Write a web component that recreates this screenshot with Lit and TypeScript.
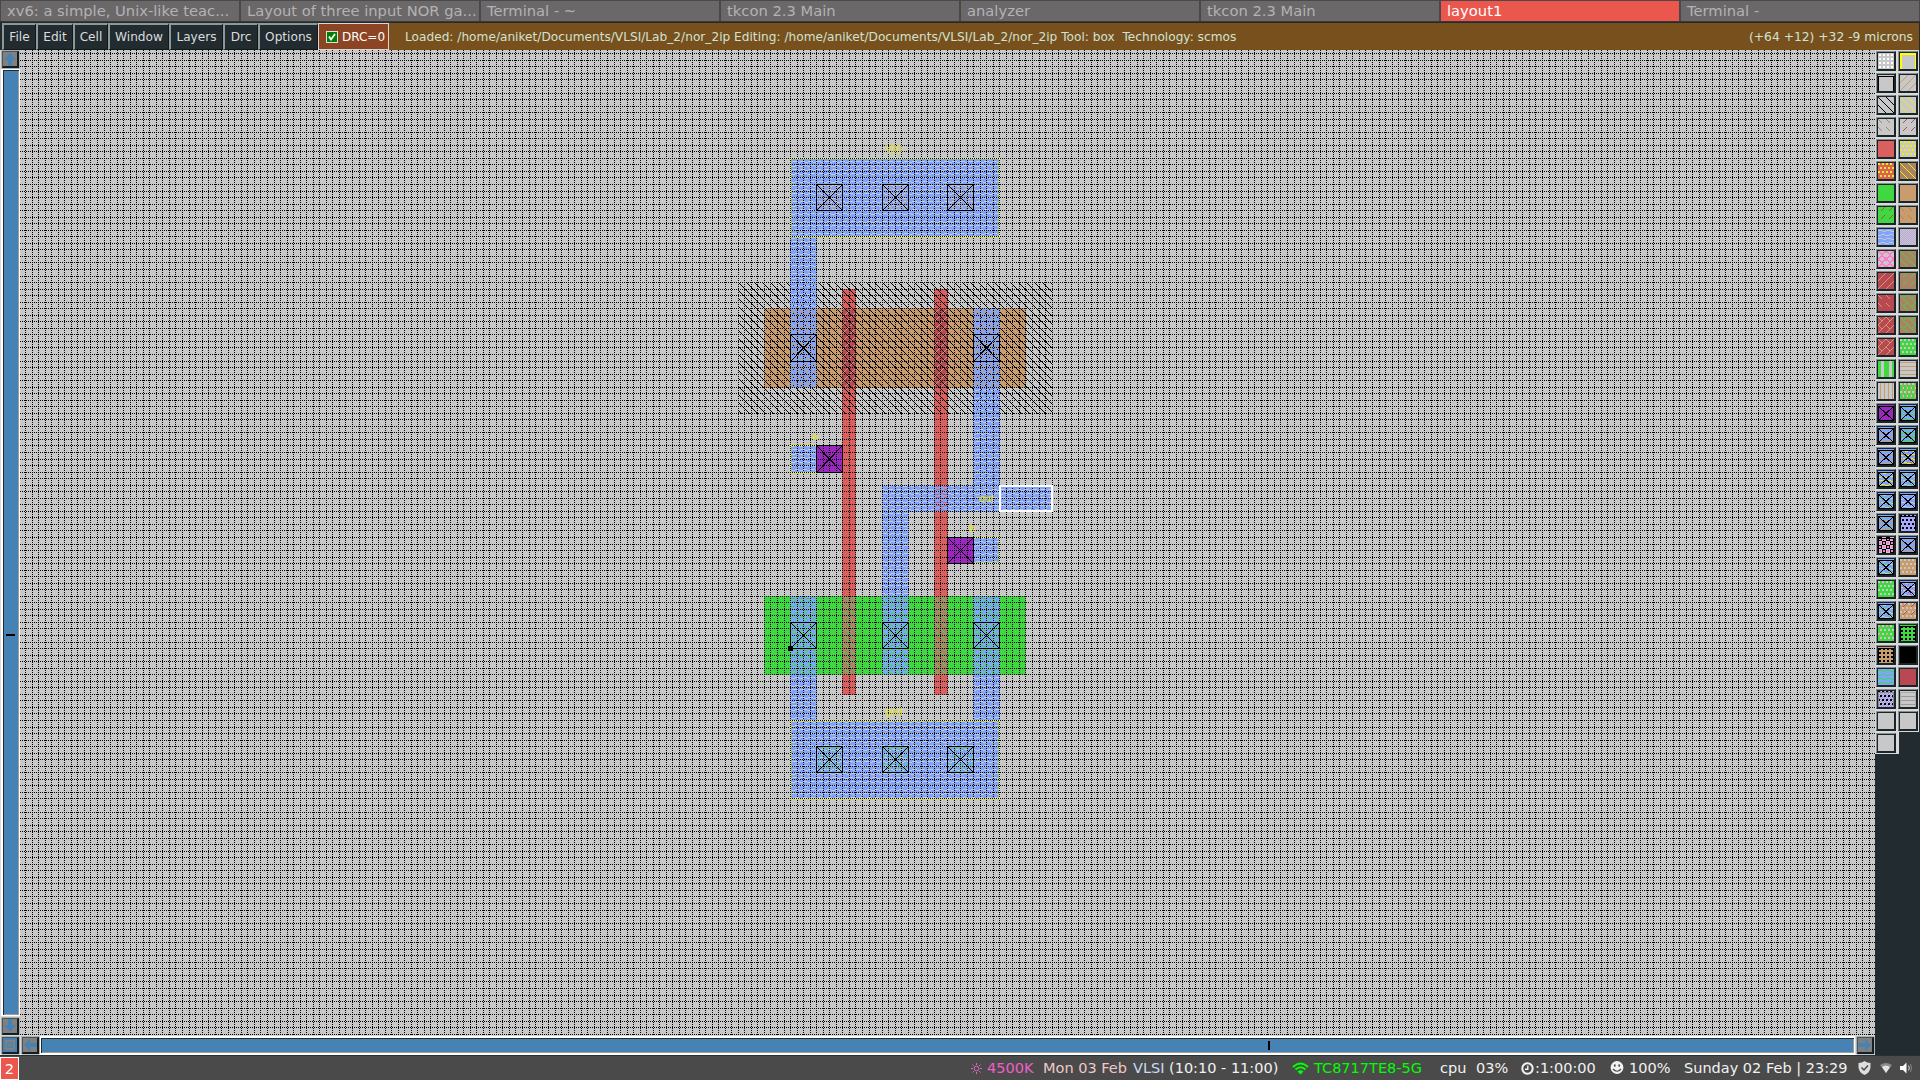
import { LitElement, html, svg, css } from "lit";
import { customElement } from "lit/decorators.js";

/* ---------- palette ---------- */
const GRAY = "#c8c8c8", TAN = "#c89c6c", BROWN = "#aa8264", RED = "#dc5f5f", CRIM = "#b94852";
const GREEN = "#40d840", BLUE = "#80a5ff", YEL = "#f0f000", PURP = "#9a28be", LAV = "#bda6e0";

/* ---------- 8x8 stipples ---------- */
const STIPPLES: Record<string, string[]> = {
  back: ["#.......", ".#......", "..#.....", "...#....", "....#...", ".....#..", "......#.", ".......#"],
  slash: [".......#", "......#.", ".....#..", "....#...", "...#....", "..#.....", ".#......", "#......."],
  backdash: ["#.......", ".#......", "..#.....", "...#....", "........", "........", "........", "........"],
  slashdash: ["......#.", ".....#..", "....#...", "...#....", "........", "........", "........", "........"],
  dots: ["........", ".##..##.", ".##..##.", "........", "........", ".##..##.", ".##..##.", "........"],
  brick: ["##..##..", "##..##..", "........", "........", "..##..##", "..##..##", "........", "........"],
  metal: ["########", ".....###", "#####...", "########", "########", "###....#", "...####.", "########"],
  dash: ["........", "#####...", ".....###", "........", "........", "...####.", "###....#", "........"],
  check: ["#.#.#.#.", ".#.#.#.#", "#.#.#.#.", ".#.#.#.#", "#.#.#.#.", ".#.#.#.#", "#.#.#.#.", ".#.#.#.#"],
  mesh: ["##....##", "###..###", "..####..", "...##...", "...##...", "..####..", "###..###", "##....##"],
  hline: ["........", "########", "........", "........", "........", "########", "........", "........"],
  vline: ["..#...#.", "..#...#.", "..#...#.", "..#...#.", "..#...#.", "..#...#.", "..#...#.", "..#...#."],
  stripe: ["###...##", "###...##", "###...##", "###...##", "###...##", "###...##", "###...##", "###...##"],
  specks: ["........", "..#...#.", "........", "#...#...", "........", "..##...#", "........", "#...#..."],
  block: ["####....", "#..#....", "#..#....", "####....", "....####", "....#..#", "....#..#", "....####"],
};

const used = new Map<string, [string, string]>();
function fill(kind: string, color: string): string {
  const id = `${kind}-${color.replace("#", "")}`;
  used.set(id, [kind, color]);
  return `url(#${id})`;
}
function stipplePath(kind: string): string {
  let d = "";
  STIPPLES[kind].forEach((row, y) => {
    for (const m of row.matchAll(/#+/g)) d += `M${m.index} ${y}h${m[0].length}v1h-${m[0].length}z`;
  });
  return d;
}

/* ---------- layer swatches: base colour, stipples, outline / cross ---------- */
type Swatch = { base: string; over?: [string, string][]; edge?: string; open?: boolean; cross?: boolean };
const s = (base: string, ...over: [string, string][]): Swatch => ({ base, over });
const x = (base: string, ...over: [string, string][]): Swatch => ({ base, over, edge: "#000", cross: true });
const e = (base: string, edge: string, ...over: [string, string][]): Swatch => ({ base, over, edge });

const SWATCHES: Swatch[] = [
  s(GRAY, ["dots", "#fff"]), { base: GRAY, edge: "#ffff00", open: true },
  e(GRAY, "#000"), s(GRAY, ["slash", TAN]),
  s(GRAY, ["back", "#000"]), s(GRAY, ["back", YEL]),
  s(GRAY, ["backdash", BROWN]), s(GRAY, ["slashdash", CRIM]),
  s(RED), s(GRAY, ["brick", YEL]),
  s(RED, ["brick", YEL]), s(BROWN, ["back", YEL]),
  s(GREEN), s(TAN),
  s(GREEN, ["slashdash", CRIM]), s(TAN, ["backdash", BROWN]),
  s(GRAY, ["metal", BLUE]), s(GRAY, ["check", LAV]),
  s(GRAY, ["mesh", "#ff7ac8"]), s(BROWN, ["back", GREEN]),
  s(CRIM, ["slash", TAN]), s(BROWN, ["slashdash", GREEN]),
  s(CRIM, ["backdash", TAN]), s(BROWN, ["back", GREEN], ["slashdash", GREEN]),
  s(CRIM, ["slash", TAN], ["backdash", TAN]), s(BROWN, ["back", GREEN], ["slashdash", GREEN]),
  s(CRIM, ["slash", TAN], ["backdash", TAN]), s(GREEN, ["brick", GRAY]),
  s(GRAY, ["stripe", GREEN]), s(GRAY, ["hline", TAN]),
  s(GRAY, ["vline", TAN]), s(GREEN, ["brick", GRAY], ["vline", TAN]),
  x(PURP), x(BLUE, ["dash", GREEN]),
  x(BLUE, ["dash", TAN]), x(BLUE, ["dash", GREEN], ["specks", GREEN]),
  x(BLUE, ["dash", TAN]), x(BLUE, ["dash", YEL], ["specks", RED]),
  x(BLUE, ["dash", YEL]), x(BLUE, ["dash", GRAY], ["specks", GREEN]),
  x(BLUE, ["dash", GRAY], ["specks", GREEN]), x(BLUE, ["dash", GRAY]),
  x(BLUE, ["specks", GREEN], ["dash", TAN]), e("#a8a8ff", "#000", ["brick", "#000"]),
  e("#d8c0dc", "#000", ["block", "#000"], ["dots", "#ff7ac8"]), x(BLUE, ["dash", TAN]),
  x(BLUE, ["dash", GRAY], ["specks", GREEN]), s(TAN, ["brick", GRAY]),
  s(GREEN, ["brick", GRAY]), x(BLUE, ["dash", GRAY], ["specks", RED]),
  x(BLUE, ["dash", GRAY], ["specks", GREEN]), s(TAN, ["brick", GRAY], ["slashdash", CRIM]),
  s(GREEN, ["brick", GRAY], ["backdash", TAN]), e(GREEN, "#000", ["dots", "#000"]),
  e(TAN, "#000", ["dots", "#000"]), s("#000"),
  s(BLUE, ["dash", GREEN]), s(CRIM),
  e(GRAY, "#888", ["check", "#9c8cff"], ["brick", "#000"]), e(GRAY, "#aaa", ["hline", "#9a9a9a"]),
  s(GRAY), s(GRAY),
  s(GRAY),
];

/* ---------- cell geometry, in lambda ---------- */
const X = (u: number) => Math.floor(790.6 + (u * 85) / 13);
const Y = (u: number) => Math.floor(158.37 + u * 6.5365);
type Box = [number, number, number, number];

const rect = ([x0, y0, x1, y1]: Box, paint: string) =>
  svg`<rect x=${X(x0)} y=${Y(y0)} width=${X(x1) - X(x0) + 1} height=${Y(y1) - Y(y0) + 1} fill=${paint}></rect>`;

const METAL: Box[] = [
  [0, 0, 32, 12], [0, 12, 4, 35], [28, 23, 32, 50], [14, 50, 40, 54], [14, 54, 18, 79],
  [0, 44, 4, 48], [28, 58, 32, 62], [0, 67, 4, 86], [28, 67, 32, 86], [0, 86, 32, 98],
];
const POLY: Box[] = [[8, 20, 10, 82], [22, 20, 24, 82]];
const CONTACTS: [number, number, string][] = [
  [4, 4, TAN], [14, 4, TAN], [24, 4, TAN], [0, 27, ""], [28, 27, ""],
  [0, 71, ""], [14, 71, ""], [28, 71, ""], [4, 90, GREEN], [14, 90, GREEN], [24, 90, GREEN],
];
const PORTS: Box[] = [[0, 0, 32, 12], [0, 44, 8, 48], [24, 58, 32, 62], [0, 86, 32, 98]];

function gridPaths(): [string, string] {
  let v = "", h = "";
  for (let k = -118; X(k) < 1875; k++) if (X(k) > 20) v += `M${X(k)} 50h1v985h-1z`;
  for (let k = -17; Y(k) < 1035; k++) if (Y(k) >= 50) h += `M20 ${Y(k)}h1855v1h-1855z`;
  return [v, h];
}

function port([a, b, c, d]: Box) {
  const w = X(c) - X(a) + 1, t = Y(d) - Y(b) + 1;
  return svg`<path d="M${X(a)} ${Y(b)}h${w}v1h-${w}zM${X(a)} ${Y(d)}h${w}v1h-${w}z" fill="url(#port-h)"></path>
    <path d="M${X(a)} ${Y(b)}h1v${t}h-1zM${X(c)} ${Y(b)}h1v${t}h-1z" fill="url(#port-v)"></path>`;
}

function cross(cx: number, cy: number) {
  const a = X(cx), b = Y(cy), w = X(cx + 4) - a, t = Y(cy + 4) - b;
  return svg`<rect x=${a + 0.5} y=${b + 0.5} width=${w} height=${t} fill="none" stroke="#000"></rect>
    <path d="M${a + 0.5} ${b + 0.5}l${w} ${t}M${a + w + 0.5} ${b + 0.5}l${-w} ${t}" stroke="#000" fill="none"></path>`;
}

function layout() {
  const [v, h] = gridPaths();
  return html`<svg class="cell" viewBox="20 50 1855 985" width="1855" height="985" shape-rendering="crispEdges">
    <defs>
      <pattern id="dot-v" width="2" height="2" patternUnits="userSpaceOnUse"><rect width="2" height="1"></rect></pattern>
      <pattern id="dot-h" width="2" height="2" patternUnits="userSpaceOnUse"><rect width="1" height="2"></rect></pattern>
      <pattern id="port-v" width="2" height="2" patternUnits="userSpaceOnUse"><rect y="1" width="2" height="1" fill="#ffff00"></rect></pattern>
      <pattern id="port-h" width="2" height="2" patternUnits="userSpaceOnUse"><rect x="1" width="1" height="2" fill="#ffff00"></rect></pattern>
    </defs>
    <rect x="20" y="50" width="1855" height="985" fill=${GRAY}></rect>
    ${rect([-4, 23, 36, 35], TAN)} ${rect([-4, 67, 36, 79], GREEN)}
    ${POLY.map((b) => rect(b, RED))}
    ${POLY.map((b) => rect([b[0], 23, b[2], 35], CRIM))}
    ${POLY.map((b) => rect([b[0], 23, b[2], 35], fill("slash", TAN)))}
    ${POLY.map((b) => rect([b[0], 67, b[2], 79], BROWN))}
    ${POLY.map((b) => rect([b[0], 67, b[2], 79], fill("back", GREEN)))}
    ${rect([-8, 19, 40, 39], fill("back", "#000"))}
    ${METAL.map((b) => rect(b, fill("metal", BLUE)))}
    ${CONTACTS.map(([cx, cy, c]) => (c ? rect([cx, cy, cx + 4, cy + 4], fill("specks", c)) : ""))}
    ${rect([4, 44, 8, 48], PURP)} ${rect([24, 58, 28, 62], PURP)}
    <path d=${v} fill="url(#dot-v)"></path>
    <path d=${h} fill="url(#dot-h)"></path>
    ${PORTS.map(port)}
    ${CONTACTS.map(([cx, cy]) => cross(cx, cy))} ${cross(4, 44)} ${cross(24, 58)}
    <rect x=${X(32) + 1} y=${Y(50) + 1} width=${X(40) - X(32) - 1} height=${Y(54) - Y(50) - 1} fill="none" stroke="#fff" stroke-width="2"></rect>
    <rect x="788" y="646" width="5" height="5" fill="#000"></rect>
    <g class="label">
      <text x="886" y="153" textLength="16" lengthAdjust="spacingAndGlyphs">VDD</text><text x="812" y="440">a</text>
      <text x="979" y="502">out</text><text x="969" y="532">b</text><text x="885" y="715">gnd</text>
    </g>
  </svg>`;
}

function swatch(w: Swatch) {
  return html`<div class="sw"><svg viewBox="0 0 16 16" width="16" height="16" shape-rendering="crispEdges">
    <rect width="16" height="16" fill=${w.base}></rect>
    ${(w.over ?? []).map(([k, c]) => svg`<rect width="16" height="16" fill=${fill(k, c)}></rect>`)}
    ${w.edge ? svg`<path d=${w.open ? "M.5 16V.5H15.5V16" : "M.5 16V1.5H15.5V16"} fill="none" stroke=${w.edge} stroke-width=${w.open ? 2 : 1}></path>` : ""}
    ${w.cross ? svg`<path d="M.5 1.500L15.500 15.500M15.500 1.500L.5 15.500M0 15.500H16" fill="none" stroke="#000"></path>` : ""}
  </svg></div>`;
}

const ARROWS: Record<string, string> = {
  up: "M7 1L13 8H9V14H5V8H1Z", down: "M7 13L13 6H9V0H5V6H1Z",
  left: "M1 7L7 1V5H14V9H7V13Z", right: "M13 7L7 1V5H0V9H7V13Z",
};
const arrow = (k: string) => html`<div class="btn"><svg viewBox="0 0 14 14" width="14" height="14">
  <path d=${ARROWS[k]} fill="#4682b4"></path></svg></div>`;

const TABS = ["xv6: a simple, Unix-like teac...", "Layout of three input NOR ga...", "Terminal - ~", "tkcon 2.3 Main", "analyzer", "tkcon 2.3 Main", "layout1", "Terminal -"];
const MENUS: [string, number][] = [["File", 34], ["Edit", 37], ["Cell", 35], ["Window", 61], ["Layers", 54], ["Drc", 35], ["Options", 60]];

@customElement("app-root")
export class AppRoot extends LitElement {
  static styles = css`
    :host { display: flex; flex-direction: column; width: 1920px; height: 1080px; overflow: hidden; background: #212b30;
      font-family: "DejaVu Sans", sans-serif; white-space: pre; }
    svg { display: block; flex: none; }
    .defs { width: 0; height: 0; overflow: hidden; }
    .tabs { display: flex; height: 22px; background: #4c484a; box-sizing: border-box; border-bottom: 1px solid #3c393b; flex: none; }
    .tab { width: 238px; height: 20px; margin: 1px; padding-left: 6px; box-sizing: border-box; background: #6b686a; color: #b4b2b3;
      font-size: 14.72px; line-height: 20px; }
    .tab.on { background: #eb574d; color: #fff; }
    .menu { display: flex; height: 28px; flex: none; padding: 1px 0 0 2px; box-sizing: border-box; background: #212b30; }
    .item { box-sizing: border-box; height: 27px; border: solid; border-width: 2px 1px 1px 2px; border-color: #8e9896 #11181b #11181b #8e9896;
      color: #dcdcdc; font-size: 12.15px; line-height: 24px; display: flex; justify-content: center; }
    .drc { display: flex; align-items: center; gap: 4px; width: 71px; height: 27px; box-sizing: border-box; background: #8c4423; color: #fff;
      border: 1px solid #dcd6d2; padding-left: 7px; font-size: 12px; }
    .info { flex: 1; display: flex; justify-content: space-between; background: #78501e; color: #cfe3d2; font-size: 12.16px; line-height: 26px; box-sizing: border-box;
      padding: 1px 6px 0 16px; margin-right: 1px; }
    .coord { font-size: 12.3px; }
    .main { display: flex; height: 985px; flex: none; }
    .vbar { width: 20px; box-sizing: border-box; background: #d9d9d9; display: flex; flex-direction: column; padding: 1px 1px 0 2px; }
    .btn { box-sizing: border-box; width: 17px; height: 17px; flex: none; background: #808080; border: solid; border-width: 1px 2px 2px 1px;
      border-color: #4b5558 #161d20 #161d20 #4b5558; box-shadow: 0 0 0 0.5px #808888; }
    .vtrough { flex: 1; display: flex; flex-direction: column; justify-content: center; box-sizing: border-box; margin: 1px 0 2px -1px; width: 19px;
      background: #4682b4; border: 1px solid #fff; border-left-width: 2px; box-shadow: inset 1px 1px #212b30, inset -1px -1px #a09c98; padding: 0 0 0 3px; }
    .vtick { width: 9px; height: 2px; background: #000; margin-top: 184px; }
    .label { font: 10.5px "Liberation Sans", sans-serif; fill: #e8e820; }
    .tray { width: 45px; }
    .pal { display: grid; grid-template-columns: 20px 20px; column-gap: 2px; padding: 1px 1px 0; row-gap: 2px; width: 44px; box-sizing: border-box; background: #d9d9d9; height: 704px; align-content: start; }
    .sw { width: 20px; height: 20px; box-sizing: border-box; background: #1b2529; border: solid; border-width: 1px;
      border-color: #82908f #1b2529 #1b2529 #82908f; padding: 1px; display: flex; }
    .void { background: #212b30; margin: -1px -1px -1px 1px; }
    .hbar { display: flex; height: 20px; flex: none; width: 1875px; box-sizing: border-box; background: #d9d9d9; padding: 2px 1px 1px 2px; border-bottom: 1px solid #fff; }
    .corner { margin-right: 3px; background: #4682b4; }
    .htrough { flex: 1; margin: -1px 2px 0 1px; height: 18px; box-sizing: border-box; background: #4682b4; border: 1px solid #fff; border-top-width: 2px;
      box-shadow: inset 1px 1px #212b30, inset -1px -1px #a09c98; padding: 3px 0 0 1227px; }
    .htick { width: 2px; height: 9px; background: #000; }
    .status { display: flex; height: 25px; flex: none; box-sizing: border-box; border-top: 1px solid #263236; background: #4a4a4a; color: #f2f2f2; font-size: 14.5px; line-height: 24px; }
    .ws { width: 19px; height: 23px; box-sizing: border-box; margin-top: 1px; border: 1px solid #fff; background: #eb574d; color: #fff; text-align: center; line-height: 21px; font-size: 14.67px; }
    .fill { width: 951px; }
    .slot { flex: none; height: 24px; display: flex; align-items: center; }
    .w4 { width: 17px; } .w5 { width: 56px; } .w6 { width: 90px; } .w7 { width: 36px; } .w8 { width: 123px; } .w9 { width: 22px; }
    .w10 { width: 126px; } .w11 { width: 36px; } .w12 { width: 45px; } .w13 { width: 14px; } .w14 { width: 75px; } .w15 { width: 19px; }
    .w16 { width: 55px; } .w17 { width: 174px; } .w18 { width: 22px; } .w19 { width: 20px; } .w20 { width: 18px; }
    .pink { color: #f05fc8; } .rose { color: #f0c8c8; } .ice { color: #c8dcf5; } .lime { color: #00ff00; }
  `;

  private status() {
    return html`<div class="status">
      <div class="ws">2</div><div class="fill"></div>
      <div class="slot w4"><svg width="13" height="13" viewBox="0 0 13 13" fill="none" stroke="#e068c0"><circle cx="6.5" cy="6.5" r="2.3"></circle>
        <path d="M6.5 1v2M6.5 10v2M1 6.5h2M10 6.5h2M2.5 2.5l1.4 1.4M9.1 9.1l1.4 1.4M2.5 10.5l1.4-1.4M9.1 3.9l1.4-1.4"></path></svg></div>
      <div class="slot w5 pink">4500K</div><div class="slot w6 rose">Mon 03 Feb</div><div class="slot w7 ice">VLSI</div><div class="slot w8">(10:10 - 11:00)</div>
      <div class="slot w9"><svg width="17" height="13" viewBox="0 0 17 13" fill="none" stroke="#00ff00" stroke-width="2"><path d="M1 5Q8.500 -2 16 5M3.500 7.500Q8.500 3 13.500 7.500"></path><path d="M5.500 9.500Q8.500 7 11.500 9.500L8.500 12.500Z" fill="#00ff00" stroke="none"></path></svg></div>
      <div class="slot w10 lime">TC8717TE8-5G</div><div class="slot w11">cpu</div><div class="slot w12">03%</div>
      <div class="slot w13"><svg width="13" height="13" viewBox="0 0 13 13" fill="none" stroke="#f2f2f2"><circle cx="6.500" cy="6.500" r="5.200" stroke-width="2"></circle><path d="M6.800 3.500V7.300H4" stroke-width="1.400"></path></svg></div>
      <div class="slot w14">:1:00:00</div>
      <div class="slot w15"><svg width="14" height="14" viewBox="0 0 14 14"><circle cx="7" cy="6.500" r="6.400" fill="#f2f2f2"></circle><ellipse cx="4.800" cy="4.600" rx=".9" ry="1.400" fill="#4a4a4a"></ellipse><ellipse cx="9.200" cy="4.600" rx=".9" ry="1.400" fill="#4a4a4a"></ellipse><path d="M3 8Q7 12.500 11 8" fill="none" stroke="#4a4a4a" stroke-width="1.200"></path></svg></div>
      <div class="slot w16">100%</div><div class="slot w17">Sunday 02 Feb | 23:29</div>
      <div class="slot w18"><svg width="13" height="14" viewBox="0 0 13 14"><path d="M6.500 0Q9 2 12.500 2V6Q12.500 11 6.500 14Q.5 11 .5 6V2Q4 2 6.500 0Z" fill="#dedede"></path><path d="M3.500 6.500L6 9L10 4.500" fill="none" stroke="#4a4a4a" stroke-width="1.500"></path></svg></div>
      <div class="slot w19"><svg width="12" height="14" viewBox="0 0 12 14"><path d="M0 4Q6 0 12 4L6 12Z" fill="#8a8a8a"></path><path d="M2 6Q6 3 10 6L6 12Z" fill="#e4e4e4"></path></svg></div>
      <div class="slot w20"><svg width="13" height="12" viewBox="0 0 13 12"><path d="M0 4H3L6.500 .5V11.500L3 8H0Z" fill="#fff"></path><path d="M8.500 3.500Q10.200 6 8.500 8.500" stroke="#ddd" fill="none"></path><path d="M10.500 2Q12.500 6 10.500 10" stroke="#888" fill="none"></path></svg></div>
    </div>`;
  }

  render() {
    const cell = layout();
    const pal = SWATCHES.map(swatch);
    return html`
      <div class="defs"><svg width="1" height="1"><defs>
        ${[...used].map(([id, [k, c]]) => svg`<pattern id=${id} width="8" height="8" patternUnits="userSpaceOnUse"><path d=${stipplePath(k)} fill=${c} shape-rendering="crispEdges"></path></pattern>`)}
      </defs></svg></div>
      <div class="tabs">${TABS.map((t) => html`<div class="tab ${t === "layout1" ? "on" : ""}">${t}</div>`)}</div>
      <div class="menu">
        ${MENUS.map(([m, w]) => html`<div class="item" style="width:${w}px">${m}</div>`)}
        <div class="drc"><svg width="12" height="12" viewBox="0 0 12 12"><rect x=".5" y=".5" width="11" height="11" fill="#008000" stroke="#e0e0e0"></rect><path d="M3 5.500L5 8.500L9 3" fill="none" stroke="#fff" stroke-width="1.800"></path></svg><span>DRC=0</span></div>
        <div class="info"><span>Loaded: /home/aniket/Documents/VLSI/Lab_2/nor_2ip Editing: /home/aniket/Documents/VLSI/Lab_2/nor_2ip Tool: box  Technology: scmos</span><span class="coord">(+64 +12) +32 -9 microns</span></div>
      </div>
      <div class="main">
        <div class="vbar">${arrow("up")}<div class="vtrough"><div class="vtick"></div></div>${arrow("down")}</div>
        ${cell}
        <div class="tray"><div class="pal">${pal}<div class="void"></div></div></div>
      </div>
      <div class="hbar">
        <div class="btn corner"><svg viewBox="0 0 14 14" width="14" height="14" fill="none" stroke="#808080" stroke-width="2"><rect x="3" y="3" width="8" height="8"></rect><rect x="6" y="6" width="2" height="2" stroke-width="1"></rect></svg></div>
        ${arrow("left")}<div class="htrough"><div class="htick"></div></div>${arrow("right")}
      </div>
      ${this.status()}`;
  }
}
